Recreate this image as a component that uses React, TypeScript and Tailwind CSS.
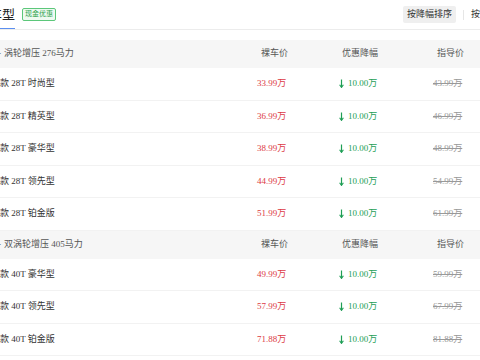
import React from "react";

type Row = { name: string; price: string; guide: string };

const g1: Row[] = [
  { name: "款 28T 时尚型", price: "33.99万", guide: "43.99万" },
  { name: "款 28T 精英型", price: "36.99万", guide: "46.99万" },
  { name: "款 28T 豪华型", price: "38.99万", guide: "48.99万" },
  { name: "款 28T 领先型", price: "44.99万", guide: "54.99万" },
  { name: "款 28T 铂金版", price: "51.99万", guide: "61.99万" },
];
const g2: Row[] = [
  { name: "款 40T 豪华型", price: "49.99万", guide: "59.99万" },
  { name: "款 40T 领先型", price: "57.99万", guide: "67.99万" },
  { name: "款 40T 铂金版", price: "71.88万", guide: "81.88万" },
];

function GroupHeader({ title }: { title: string }) {
  return (
    <div className="flex h-[28px] items-center bg-[#f6f6f6] text-[9px] text-[#555]">
      <div className="flex-1 whitespace-nowrap">
        <span className="ml-[-2px]">-</span>
        <span className="ml-[3px]">{title}</span>
      </div>
      <div className="w-[81px] pl-[4px]">裸车价</div>
      <div className="w-[95px] pl-[4px]">优惠降幅</div>
      <div className="w-[47px] pl-[4px]">指导价</div>
    </div>
  );
}

function DataRow({ r }: { r: Row }) {
  return (
    <div className="flex h-[32.5px] items-center border-b border-[#f2f2f2] bg-white text-[9px]">
      <div className="flex-1 whitespace-nowrap text-[#333]">{r.name}</div>
      <div className="w-[81px] text-[#dc3a44]">{r.price}</div>
      <div className="flex w-[95px] items-center text-[#1e9e55]">
        <svg width="5" height="9" viewBox="0 0 5 9" className="ml-[1px] mr-[4px]">
          <path d="M2.5 0.5 V8" stroke="#1e9e55" strokeWidth="1.2" fill="none" />
          <path d="M0.6 5.8 L2.5 8.4 L4.4 5.8" stroke="#1e9e55" strokeWidth="1.1" fill="none" />
        </svg>
        <span>10.00万</span>
      </div>
      <div className="w-[47px] text-[#999] line-through">{r.guide}</div>
    </div>
  );
}

export default function App() {
  return (
    <div
      className="h-[360px] w-[480px] overflow-hidden bg-white"
      style={{ fontFamily: '"Liberation Serif", "Noto Sans CJK SC", serif' }}
    >
      <div className="relative flex h-[30px] items-center overflow-hidden border-b border-[#ececec]">
        <div className="relative flex h-full shrink-0 items-center">
          <span className="ml-[-11px] text-[13px] text-[#222]">车型</span>
          <div className="absolute bottom-[-1px] left-0 h-[2px] w-[15px] bg-[#5b8ff0]" />
        </div>
        <span className="ml-[7px] flex h-[13px] shrink-0 items-center rounded-[2px] border border-[#5cc77a] bg-[#eefaf1] px-[2px] text-[7px] leading-none text-[#2aa14b]">
          现金优惠
        </span>
        <div className="ml-[347px] flex shrink-0 items-center">
          <span className="flex h-[17px] items-center rounded-[2px] bg-[#efefef] px-[4px] text-[9px] text-[#333]">
            按降幅排序
          </span>
          <span className="mx-[7px] h-[10px] w-px bg-[#e6e6e6]" />
          <span className="whitespace-nowrap text-[9px] text-[#333]">按价格排序</span>
        </div>
      </div>
      <div className="h-[10px]" />
      <GroupHeader title="涡轮增压 276马力" />
      {g1.map((r) => (
        <DataRow key={r.name} r={r} />
      ))}
      <GroupHeader title="双涡轮增压 405马力" />
      {g2.map((r) => (
        <DataRow key={r.name} r={r} />
      ))}
    </div>
  );
}
